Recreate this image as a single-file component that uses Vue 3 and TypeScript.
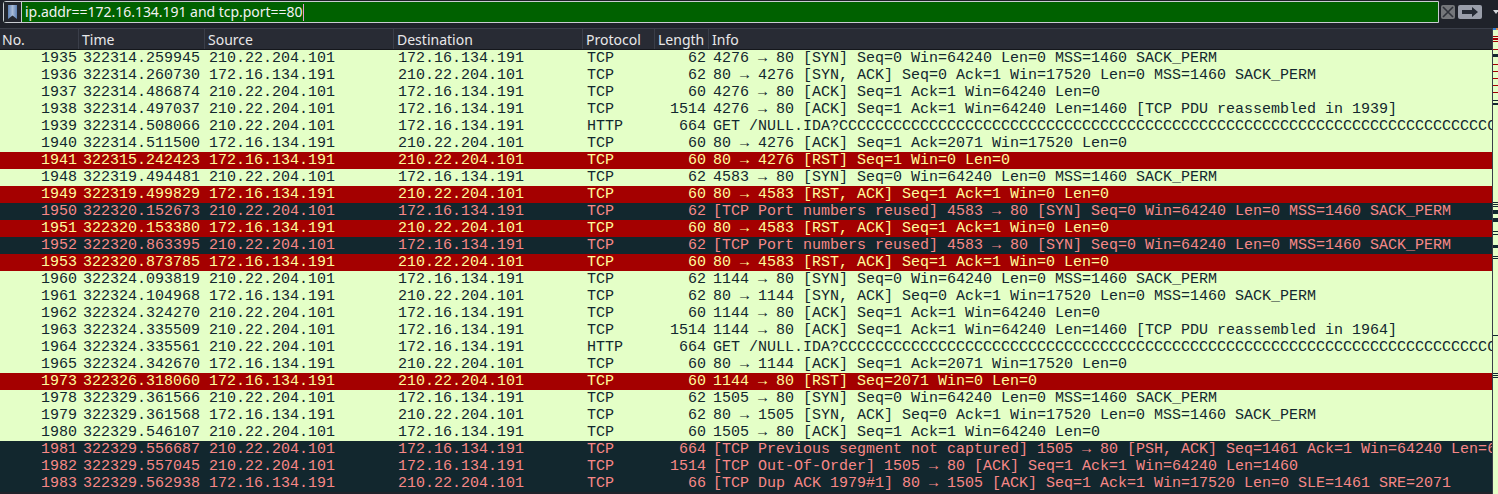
<script setup lang="ts">
type Kind = 'ok' | 'rst' | 'bad'
interface Row { no: number; time: string; out: boolean; proto: string; len: number; info: string; kind: Kind }
const A = '210.22.204.101'
const B = '172.16.134.191'
const C = 'C'.repeat(120)
const raw: [number, string, 0 | 1, string, number, string, Kind][] = [
  [1935, '322314.259945', 0, 'TCP', 62, '4276 → 80 [SYN] Seq=0 Win=64240 Len=0 MSS=1460 SACK_PERM', 'ok'],
  [1936, '322314.260730', 1, 'TCP', 62, '80 → 4276 [SYN, ACK] Seq=0 Ack=1 Win=17520 Len=0 MSS=1460 SACK_PERM', 'ok'],
  [1937, '322314.486874', 0, 'TCP', 60, '4276 → 80 [ACK] Seq=1 Ack=1 Win=64240 Len=0', 'ok'],
  [1938, '322314.497037', 0, 'TCP', 1514, '4276 → 80 [ACK] Seq=1 Ack=1 Win=64240 Len=1460 [TCP PDU reassembled in 1939]', 'ok'],
  [1939, '322314.508066', 0, 'HTTP', 664, 'GET /NULL.IDA?' + C, 'ok'],
  [1940, '322314.511500', 1, 'TCP', 60, '80 → 4276 [ACK] Seq=1 Ack=2071 Win=17520 Len=0', 'ok'],
  [1941, '322315.242423', 1, 'TCP', 60, '80 → 4276 [RST] Seq=1 Win=0 Len=0', 'rst'],
  [1948, '322319.494481', 0, 'TCP', 62, '4583 → 80 [SYN] Seq=0 Win=64240 Len=0 MSS=1460 SACK_PERM', 'ok'],
  [1949, '322319.499829', 1, 'TCP', 60, '80 → 4583 [RST, ACK] Seq=1 Ack=1 Win=0 Len=0', 'rst'],
  [1950, '322320.152673', 0, 'TCP', 62, '[TCP Port numbers reused] 4583 → 80 [SYN] Seq=0 Win=64240 Len=0 MSS=1460 SACK_PERM', 'bad'],
  [1951, '322320.153380', 1, 'TCP', 60, '80 → 4583 [RST, ACK] Seq=1 Ack=1 Win=0 Len=0', 'rst'],
  [1952, '322320.863395', 0, 'TCP', 62, '[TCP Port numbers reused] 4583 → 80 [SYN] Seq=0 Win=64240 Len=0 MSS=1460 SACK_PERM', 'bad'],
  [1953, '322320.873785', 1, 'TCP', 60, '80 → 4583 [RST, ACK] Seq=1 Ack=1 Win=0 Len=0', 'rst'],
  [1960, '322324.093819', 0, 'TCP', 62, '1144 → 80 [SYN] Seq=0 Win=64240 Len=0 MSS=1460 SACK_PERM', 'ok'],
  [1961, '322324.104968', 1, 'TCP', 62, '80 → 1144 [SYN, ACK] Seq=0 Ack=1 Win=17520 Len=0 MSS=1460 SACK_PERM', 'ok'],
  [1962, '322324.324270', 0, 'TCP', 60, '1144 → 80 [ACK] Seq=1 Ack=1 Win=64240 Len=0', 'ok'],
  [1963, '322324.335509', 0, 'TCP', 1514, '1144 → 80 [ACK] Seq=1 Ack=1 Win=64240 Len=1460 [TCP PDU reassembled in 1964]', 'ok'],
  [1964, '322324.335561', 0, 'HTTP', 664, 'GET /NULL.IDA?' + C, 'ok'],
  [1965, '322324.342670', 1, 'TCP', 60, '80 → 1144 [ACK] Seq=1 Ack=2071 Win=17520 Len=0', 'ok'],
  [1973, '322326.318060', 1, 'TCP', 60, '1144 → 80 [RST] Seq=2071 Win=0 Len=0', 'rst'],
  [1978, '322329.361566', 0, 'TCP', 62, '1505 → 80 [SYN] Seq=0 Win=64240 Len=0 MSS=1460 SACK_PERM', 'ok'],
  [1979, '322329.361568', 1, 'TCP', 62, '80 → 1505 [SYN, ACK] Seq=0 Ack=1 Win=17520 Len=0 MSS=1460 SACK_PERM', 'ok'],
  [1980, '322329.546107', 0, 'TCP', 60, '1505 → 80 [ACK] Seq=1 Ack=1 Win=64240 Len=0', 'ok'],
  [1981, '322329.556687', 0, 'TCP', 664, '[TCP Previous segment not captured] 1505 → 80 [PSH, ACK] Seq=1461 Ack=1 Win=64240 Len=610', 'bad'],
  [1982, '322329.557045', 0, 'TCP', 1514, '[TCP Out-Of-Order] 1505 → 80 [ACK] Seq=1 Ack=1 Win=64240 Len=1460', 'bad'],
  [1983, '322329.562938', 1, 'TCP', 66, '[TCP Dup ACK 1979#1] 80 → 1505 [ACK] Seq=1 Ack=1 Win=17520 Len=0 SLE=1461 SRE=2071', 'bad']
]
const rows: Row[] = raw.map(([no, time, o, proto, len, info, kind]) => ({ no, time, out: !!o, proto, len, info, kind }))
const ip = (r: Row, dest: boolean): string => (r.out !== dest ? B : A)
const RED = '#a40000'
const DK = '#12272e'
// [page y, height, colour] of the packet marks on the right-hand intelligent scrollbar
const marks: { y: number; h: number; c: string }[] = ([
  [36, 1, RED], [38, 2, RED], [41, 1, RED], [49, 1, RED], [54, 3, DK], [64, 1, RED], [71, 1, RED],
  [78, 1, RED], [85, 1, RED], [92, 1, RED], [100, 1, DK], [103, 2, DK],
  [202, 1, DK], [204, 1, DK], [206, 1, DK], [210, 4, DK], [218, 4, DK], [231, 1, DK], [234, 1, DK],
  [245, 3, DK], [256, 1, DK], [258, 1, DK], [335, 1, DK], [373, 1, DK], [375, 1, DK], [377, 1, DK]
] as [number, number, string][]).map(([y, h, c]) => ({ y: y - 28, h, c }))
</script>

<template>
  <div class="app">
    <div class="filterbar">
      <div class="filter">
        <div class="bookmark">
          <svg width="9" height="14" viewBox="0 0 9 14">
            <defs>
              <linearGradient id="bm" x1="0" y1="0" x2="1" y2="0">
                <stop offset="0" stop-color="#5d80b4" />
                <stop offset="0.5" stop-color="#a9bcd8" />
                <stop offset="1" stop-color="#5d80b4" />
              </linearGradient>
            </defs>
            <path d="M0 0H9V14L4.5 10.5L0 14Z" fill="url(#bm)" />
          </svg>
        </div>
        <div class="expr">ip.addr==172.16.134.191 and tcp.port==80<span class="caret"></span></div>
      </div>
      <div class="btns">
        <div class="btn x">
          <svg width="14" height="14" viewBox="0 0 14 14"><path d="M2 2L12 12M12 2L2 12" stroke="#2f323a" stroke-width="1.6" /></svg>
        </div>
        <div class="btn go">
          <svg width="16" height="10" viewBox="0 0 16 10"><path d="M0 3H10V0L16 5L10 10V7H0Z" fill="#252a34" /></svg>
        </div>
        <div class="more"></div>
      </div>
    </div>
    <div class="main">
      <div class="table">
        <div class="head">
          <div class="hc c-no">No.</div>
          <div class="hc c-time">Time</div>
          <div class="hc c-src">Source</div>
          <div class="hc c-dst">Destination</div>
          <div class="hc c-proto">Protocol</div>
          <div class="hc c-len">Length</div>
          <div class="hc c-info">Info</div>
        </div>
        <div class="rows">
          <div v-for="r in rows" :key="r.no" class="row" :class="r.kind">
            <div class="c c-no num">{{ r.no }}</div>
            <div class="c c-time">{{ r.time }}</div>
            <div class="c c-src">{{ ip(r, false) }}</div>
            <div class="c c-dst">{{ ip(r, true) }}</div>
            <div class="c c-proto">{{ r.proto }}</div>
            <div class="c c-len num">{{ r.len }}</div>
            <div class="c c-info">{{ r.info }}</div>
          </div>
        </div>
      </div>
      <div class="minimap">
        <div class="mini-top"></div>
        <div v-for="(m, i) in marks" :key="i" class="mark" :style="{ top: m.y + 'px', height: m.h + 'px', background: m.c }"></div>
      </div>
    </div>
  </div>
</template>

<style scoped>
.app {
  width: 1498px;
  height: 494px;
  overflow: hidden;
  background: #1f222a;
  display: flex;
  flex-direction: column;
}
.filterbar {
  height: 27px;
  margin-top: 1px;
  display: flex;
  flex: none;
}
.filter {
  flex: none;
  width: 1436px;
  margin-left: 3px;
  height: 22px;
  background: #006100;
  border: 1px solid #c9ccd2;
  border-radius: 3px 0 0 3px;
  box-sizing: border-box;
  display: flex;
  color: #f2f2f2;
}
.bookmark {
  flex: none;
  box-sizing: border-box;
  width: 18px;
  background: #23262e;
  border-right: 1px solid #c9ccd2;
  display: flex;
  align-items: center;
  justify-content: center;
}
.expr {
  font-family: "Noto Sans", sans-serif;
  font-size: 14px;
  line-height: 20px;
  padding-left: 3px;
  white-space: nowrap;
  letter-spacing: -0.03px;
}
.caret {
  display: inline-block;
  width: 1px;
  height: 17px;
  margin-left: 1px;
  vertical-align: -4px;
  background: #e89ad0;
}
.btns {
  flex: none;
  display: flex;
  align-items: flex-start;
  gap: 3px;
  padding-left: 2px;
  padding-top: 4px;
}
.btn {
  border-radius: 2px;
  height: 14px;
  display: flex;
  align-items: center;
  justify-content: center;
}
.btn.x { width: 14px; background: #74767a; }
.btn.go { width: 24px; background: #9a9eaa; }
.more {
  margin: 5px 0 0 8px;
  width: 0;
  height: 0;
  border-left: 3.5px solid transparent;
  border-right: 3.5px solid transparent;
  border-top: 4px solid #d4d6da;
}
.main {
  flex: 1;
  display: flex;
  min-height: 0;
}
.table {
  width: 1492px;
  flex: none;
  min-width: 0;
  overflow: hidden;
}
.head {
  display: flex;
  background: #282b34;
  border-top: 1px solid #3a3e49;
  border-bottom: 1px solid #14161b;
  box-sizing: border-box;
  height: 22px;
  font-family: "Noto Sans", sans-serif;
  font-size: 14px;
  color: #e8e8ea;
}
.hc {
  box-sizing: border-box;
  padding-left: 3px;
  line-height: 22px;
  border-right: 1px solid #3a3e49;
  white-space: nowrap;
  overflow: hidden;
}
.hc.c-no { padding-left: 2px; }
.hc.c-info { border-right: 0; }
.row {
  height: 17px;
  display: flex;
  font-family: "Liberation Mono", monospace;
  font-size: 15px;
  line-height: 17px;
}
.ok { background: #e4ffc7; color: #12272e; }
.rst { background: #a40000; color: #fffc9c; }
.bad { background: #12272e; color: #f78787; }
.c {
  box-sizing: border-box;
  padding-left: 4px;
  padding-right: 2px;
  white-space: nowrap;
  overflow: hidden;
}
.num { text-align: right; }
.c-no { width: 79px; flex: none; }
.c-time { width: 126px; flex: none; }
.c-src { width: 189px; flex: none; }
.c-dst { width: 189px; flex: none; }
.c-proto { width: 72px; flex: none; }
.c-len { width: 54px; flex: none; padding-right: 3px; }
.c-info { flex: 1; min-width: 0; }
.minimap {
  flex: 1;
  position: relative;
  background: #e4ffc7;
  border-left: 1px solid #3a3e49;
}
.mini-top {
  height: 2px;
  background: linear-gradient(90deg, #2f7fd8 0 60%, #d8864a 60% 100%);
}
.mark {
  position: absolute;
  left: 0;
  right: 0;
}
</style>
